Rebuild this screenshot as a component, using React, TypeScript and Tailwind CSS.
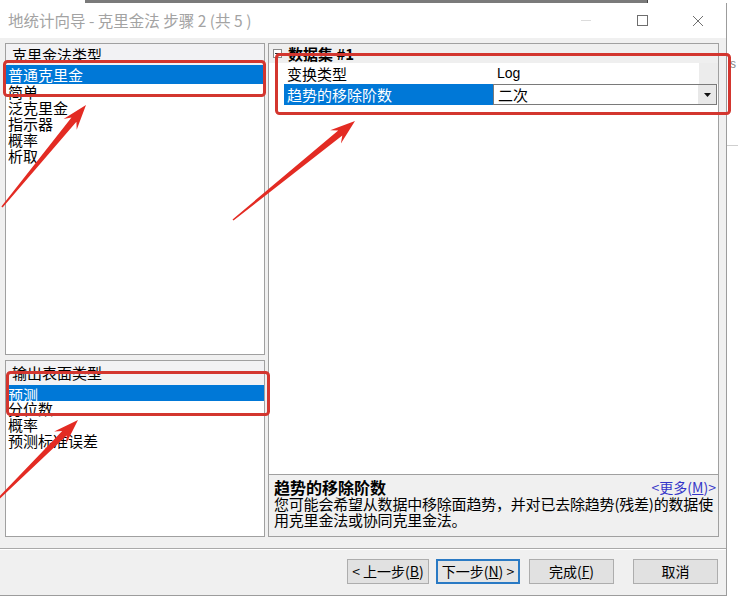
import React from "react";

type Pt = [number, number];

// tapered annotation arrow, tail -> tip
function arrowPoints(tail: Pt, tip: Pt): string {
  const [x1, y1] = tail;
  const [x2, y2] = tip;
  const len = Math.hypot(x2 - x1, y2 - y1);
  const ux = (x2 - x1) / len;
  const uy = (y2 - y1) / len;
  const nx = -uy;
  const ny = ux;
  const at = (d: number, w: number) =>
    `${(x2 - ux * d + nx * w).toFixed(1)},${(y2 - uy * d + ny * w).toFixed(1)}`;
  return [at(len, 0.8), at(19, 3.2), at(25, 8.5), at(0, 0), at(25, -8.5), at(19, -3.2), at(len, -0.8)].join(" ");
}

interface ListProps {
  header: string;
  headerH: string;
  items: string[];
  selected: number;
  selH: string;
  className: string;
}

const ListBox = ({ header, headerH, items, selected, selH, className }: ListProps) => {
  return (
    <div className={`bg-white border border-[#a0a0a0] flex flex-col ${className}`}>
      <div className={`${headerH} bg-[#f2f2f4] pl-[6px] flex items-center text-[15px] leading-4 text-black`}>{header}</div>
      {items.map((it, i) => (
        <div
          key={it}
          className={
            i === selected
              ? `${selH} bg-[#0078d7] text-white pl-[2px] text-[15px] leading-[19px]`
              : "h-4 pl-[2px] text-[15px] leading-4 text-black"
          }
        >
          {it}
        </div>
      ))}
    </div>
  );
};

const Btn = ({ children, className }: { children: React.ReactNode; className: string }) => (
  <div className={`h-[25px] flex items-center justify-center text-[14px] text-black whitespace-pre ${className}`}>{children}</div>
);

const App = () => {
  return (
    <div className="relative w-[738px] h-[600px] bg-white overflow-hidden font-['Noto_Sans_CJK_SC','Noto_Sans',sans-serif]">
      {/* edge of window behind */}
      <div className="h-[3px] flex">
        <div className="w-[85px]" />
        <div className="w-[562px] bg-[#7a7a7a]" />
        <div className="w-[1px] bg-[#444]" />
      </div>

      <div className="flex">
        {/* dialog window */}
        <div className="w-[727px] h-[593px] border-r border-b border-[#9c9c9c] flex flex-col">
          {/* title bar */}
          <div className="h-[35px] bg-white flex items-center">
            <div className="pl-[8px] text-[15.5px] text-[#a3a3a3] flex-1 whitespace-nowrap">地统计向导 - 克里金法 步骤 2 (共 5 )</div>
            <div className="flex h-full">
              <div className="w-[56px] flex items-center justify-center">
                <div className="w-[10px] h-px bg-[#dcdcdc]" />
              </div>
              <div className="w-[56px] flex items-center justify-center">
                <div className="w-[11px] h-[11px] border border-[#6e6e6e]" />
              </div>
              <div className="w-[56px] flex items-center justify-center">
                <svg width="12" height="12" viewBox="0 0 12 12">
                  <path d="M1 1 L11 11 M11 1 L1 11" stroke="#707070" strokeWidth="1" />
                </svg>
              </div>
            </div>
          </div>

          {/* body */}
          <div className="flex-1 bg-[#f0f0f0] flex flex-col">
            <div className="flex pt-[5px] pl-[5px] gap-[3px]">
              <div className="w-[260px] flex flex-col gap-[5px]">
                <ListBox
                  className="h-[312px]"
                  header="克里金法类型"
                  headerH="h-[21px]"
                  items={["普通克里金", "简单", "泛克里金", "指示器", "概率", "析取"]}
                  selected={0}
                  selH="h-[19px]"
                />
                <ListBox
                  className="h-[177px]"
                  header="输出表面类型"
                  headerH="h-[24px]"
                  items={["预测", "分位数", "概率", "预测标准误差"]}
                  selected={0}
                  selH="h-4 leading-4"
                />
              </div>

              {/* property grid + description */}
              <div className="w-[451px] h-[494px] border border-[#a0a0a0] flex flex-col">
                <div className="flex-1 bg-white flex flex-col">
                  <div className="h-[19px] bg-[#efefef] flex items-center">
                    <div className="w-[16px] flex items-center justify-center">
                      <div className="w-[9px] h-[9px] border border-[#888] bg-white flex items-center justify-center">
                        <div className="w-[5px] h-px bg-[#333]" />
                      </div>
                    </div>
                    <div className="pl-[3px] text-[15px] font-bold leading-4 text-black">数据集 #1</div>
                  </div>
                  <div className="h-[21px] flex">
                    <div className="w-[224px] pl-[18px] text-[15px] leading-[21px] text-black">变换类型</div>
                    <div className="flex-1 pl-[4px] text-[14px] leading-[21px] text-black font-['Liberation_Sans',sans-serif]">Log</div>
                    <div className="w-[19px] bg-[#ececec]" />
                  </div>
                  <div className="h-[21px] flex">
                    <div className="w-[15px]" />
                    <div className="w-[209px] bg-[#0078d7] text-white pl-[3px] text-[15px] leading-[21px]">趋势的移除阶数</div>
                    <div className="flex-1 border border-[#7a7a7a] flex mr-px">
                      <div className="flex-1 pl-[4px] text-[15px] leading-[19px] text-black">二次</div>
                      <div className="w-[18px] bg-[#e8e8e8] flex items-center justify-center">
                        <svg width="7" height="4" viewBox="0 0 7 4">
                          <path d="M0 0 H7 L3.5 4 Z" fill="#111" />
                        </svg>
                      </div>
                    </div>
                  </div>
                </div>
                <div className="h-[62px] border-t border-[#a0a0a0] bg-[#f0f0f0] pl-[5px] pr-[2px] pt-[3px]">
                  <div className="flex justify-between items-center h-[18px]">
                    <div className="text-[16px] font-bold leading-4 text-black">趋势的移除阶数</div>
                    <div className="text-[14px] leading-4 text-[#3535c8]">
                      &lt;更多(<span className="underline">M</span>)&gt;
                    </div>
                  </div>
                  <div className="text-[15px] leading-4 text-black whitespace-nowrap tracking-[-0.2px]">
                    您可能会希望从数据中移除面趋势，并对已去除趋势(残差)的数据使
                    <br />
                    用克里金法或协同克里金法。
                  </div>
                </div>
              </div>
            </div>

            {/* separator + buttons */}
            <div className="mt-[11px] border-t border-[#a9a9a9] border-b-white border-b" />
            <div className="flex justify-end pr-[8px] pt-[9px]">
              <Btn className="w-[82px] border border-[#adadad] bg-[#e1e1e1]">
                &lt; 上一步(<span className="underline">B</span>)
              </Btn>
              <Btn className="w-[84px] ml-[7px] border-2 border-[#2a7ac4] bg-[#e5e5e5]">
                下一步(<span className="underline">N</span>) &gt;
              </Btn>
              <Btn className="w-[85px] ml-[9px] border border-[#adadad] bg-[#e1e1e1]">
                完成(<span className="underline">F</span>)
              </Btn>
              <Btn className="w-[85px] ml-[19px] border border-[#adadad] bg-[#e1e1e1]">取消</Btn>
            </div>
          </div>
        </div>

        {/* whatever is behind, to the right */}
        <div className="flex-1 flex flex-col">
          <div className="h-[55px]" />
          <div className="pl-[3px] text-[12px] leading-3 text-[#888] font-['Liberation_Sans',sans-serif]">s</div>
          <div className="h-[75px]" />
          <div className="h-px bg-[#cfcfcf]" />
        </div>
      </div>

      {/* red annotations drawn over the screenshot */}
      <svg className="absolute inset-0 pointer-events-none" width="738" height="600" viewBox="0 0 738 600">
        <g fill="none" stroke="#d3362f" strokeWidth="3">
          <rect x="4.5" y="61.5" width="260" height="34" rx="3" />
          <rect x="276.5" y="54.5" width="453" height="59" rx="3" />
          <rect x="7.5" y="372.5" width="261" height="42" rx="3" />
        </g>
        <g fill="#e32b23">
          <polygon points={arrowPoints([2, 207], [86, 105])} />
          <polygon points={arrowPoints([233, 220], [355, 121])} />
          <polygon points={arrowPoints([-4, 501], [78, 420])} />
        </g>
      </svg>
    </div>
  );
};

export default App;
